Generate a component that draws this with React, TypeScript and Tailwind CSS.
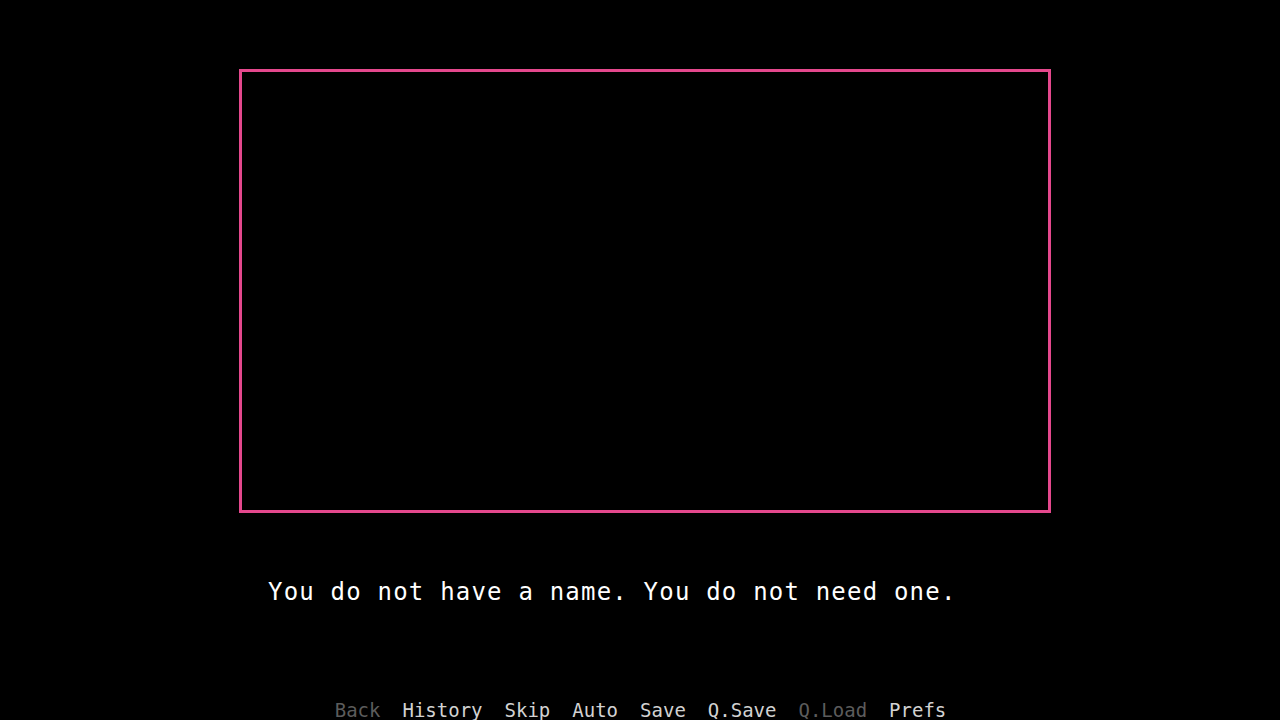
const menu: { label: string; disabled?: boolean }[] = [
  { label: 'Back', disabled: true },
  { label: 'History' },
  { label: 'Skip' },
  { label: 'Auto' },
  { label: 'Save' },
  { label: 'Q.Save' },
  { label: 'Q.Load', disabled: true },
  { label: 'Prefs' },
];

export default function App() {
  return (
    <div
      className="flex h-[720px] w-[1280px] flex-col overflow-hidden bg-black"
      style={{ fontFamily: '"DejaVu Sans Mono", "Liberation Mono", monospace' }}
    >
      <div className="ml-[239px] mt-[69px] h-[446px] w-[812px] border-[3px] border-[#e5488d]" />
      <p className="ml-[268px] mt-[67px] text-[24px] leading-[24px] tracking-[1.2px] text-white">
        You do not have a name. You do not need one.
      </p>
      <nav className="mt-[97px] flex justify-center gap-[22px] pl-[1px] text-[19px] leading-[19px]">
        {menu.map((item) => (
          <span
            key={item.label}
            className={item.disabled ? 'text-[#5c5c5c]' : 'text-[#d2d2d2]'}
          >
            {item.label}
          </span>
        ))}
      </nav>
    </div>
  );
}
